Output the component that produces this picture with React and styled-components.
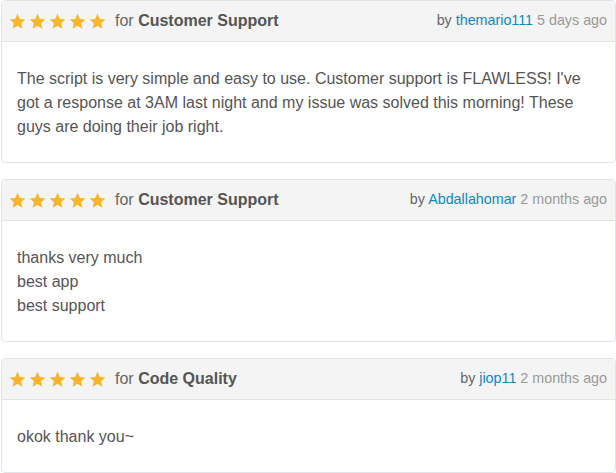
import React from "react";
import styled, { createGlobalStyle } from "styled-components";

const Global = createGlobalStyle`
  html, body { margin: 0; padding: 0; background: #fff; }
  body { font-family: "Liberation Sans", Arial, sans-serif; }
`;

const List = styled.div`
  display: flex;
  flex-direction: column;
  gap: 16px;
  padding: 0 0 0 1px;
  width: 615px;
`;

const Card = styled.div`
  border: 1px solid #e1e5e9;
  border-radius: 4px;
  background: #fff;
  overflow: hidden;
`;

const Header = styled.div`
  height: 40px;
  background: #f4f4f4;
  border-bottom: 1px solid #e1e5e9;
  display: flex;
  align-items: center;
  justify-content: space-between;
  padding: 0 8px 0 7px;
`;

const Left = styled.div`
  display: flex;
  align-items: center;
`;

const Stars = styled.div`
  display: flex;
  gap: 3px;
  margin-right: 9px;
  margin-top: 1px;
`;

const For = styled.span`
  font-size: 16px;
  color: #666;
  b { color: #555; font-weight: 700; }
`;

const Meta = styled.span`
  font-size: 14.3px;
  color: #666;
  margin-top: -2px;
`;

const Author = styled.a`
  color: #0a8bbf;
  text-decoration: none;
`;

const Date = styled.span`
  color: #999;
`;

const Body = styled.div`
  padding: 25px 15px 23px;
  font-size: 16px;
  line-height: 24px;
  color: #555;
`;

const Star = () => (
  <svg width="17" height="17" viewBox="0 0 24 24">
    <path
      fill="#f6b52b"
      d="M12 1.2l3.2 7.3 7.9.7-6 5.2 1.8 7.8L12 18.1l-6.9 4.1 1.8-7.8-6-5.2 7.9-.7z"
    />
  </svg>
);

const reviews = [
  {
    topic: "Customer Support",
    author: "themario111",
    when: "5 days ago",
    lines: [
      "The script is very simple and easy to use. Customer support is FLAWLESS! I've got a response at 3AM last night and my issue was solved this morning! These guys are doing their job right.",
    ],
  },
  {
    topic: "Customer Support",
    author: "Abdallahomar",
    when: "2 months ago",
    lines: ["thanks very much", "best app", "best support"],
  },
  {
    topic: "Code Quality",
    author: "jiop11",
    when: "2 months ago",
    lines: ["okok thank you~"],
  },
];

export default function App() {
  return (
    <>
      <Global />
      <List>
        {reviews.map((r, i) => (
          <Card key={i}>
            <Header>
              <Left>
                <Stars>
                  {[0, 1, 2, 3, 4].map((s) => (
                    <Star key={s} />
                  ))}
                </Stars>
                <For>
                  for <b>{r.topic}</b>
                </For>
              </Left>
              <Meta>
                by <Author href="#">{r.author}</Author> <Date>{r.when}</Date>
              </Meta>
            </Header>
            <Body>
              {r.lines.map((l, j) => (
                <div key={j}>{l}</div>
              ))}
            </Body>
          </Card>
        ))}
      </List>
    </>
  );
}
